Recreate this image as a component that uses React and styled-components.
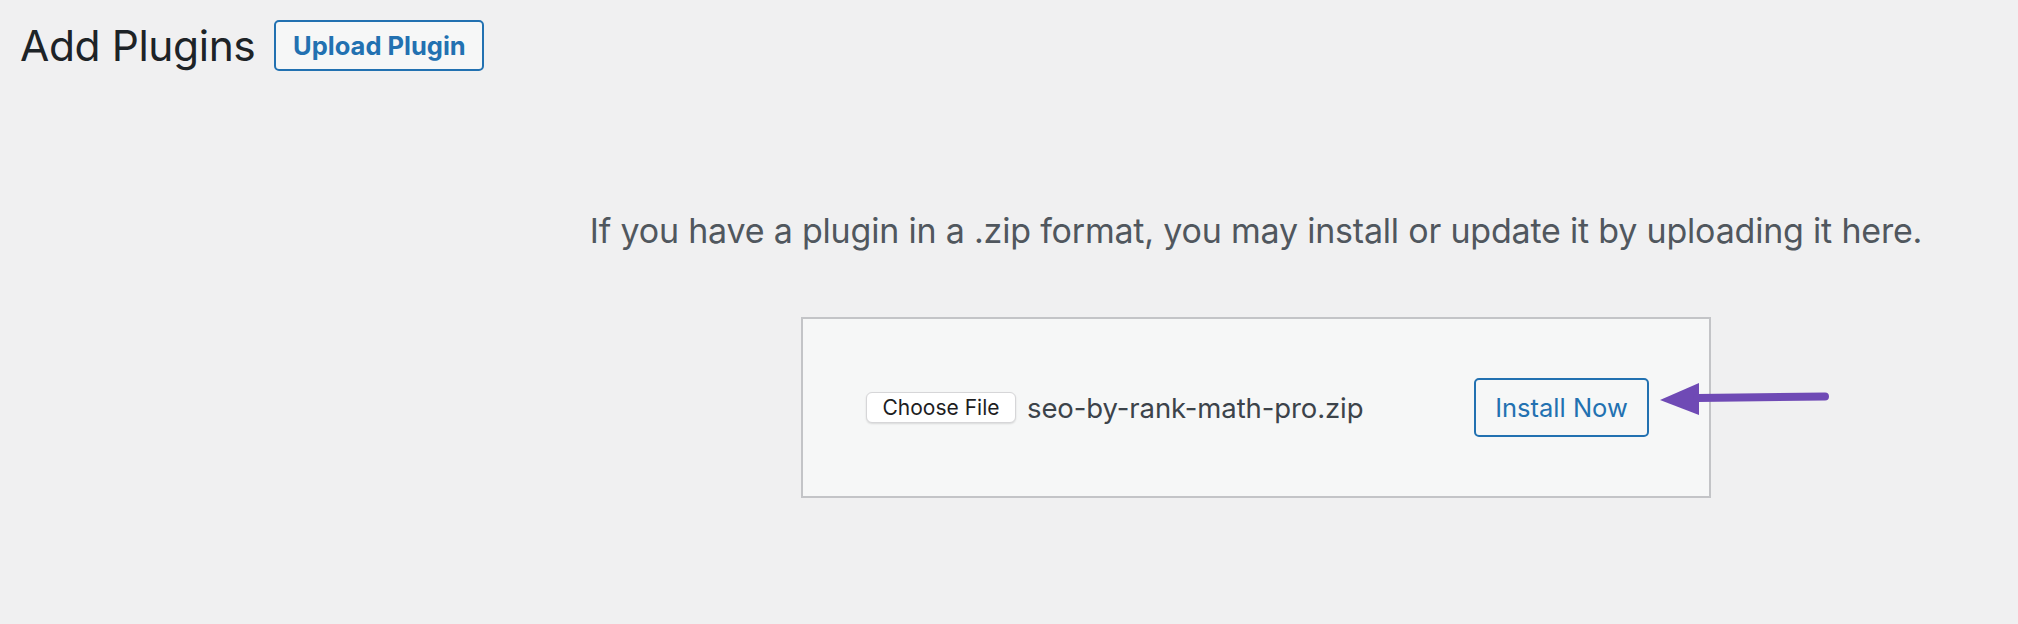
import React from "react";
import styled, { createGlobalStyle } from "styled-components";

const Global = createGlobalStyle`
  html, body { margin: 0; padding: 0; background: #f0f0f1; }
  body { font-family: Inter, "Noto Sans", "Liberation Sans", sans-serif; color: #1d2327; }
  * { box-sizing: border-box; }
`;

const Page = styled.div`
  position: relative;
  width: 2018px;
  height: 624px;
  padding: 20px 0 0 20px;
`;

const Header = styled.div`
  display: flex;
  align-items: center;
  gap: 19px;
`;

const Title = styled.h1`
  margin: 0;
  font-size: 42.5px;
  font-weight: 400;
  letter-spacing: -0.4px;
  color: #1d2327;
  line-height: 51px;
`;

const OutlineButton = styled.button`
  font-family: inherit;
  display: inline-flex;
  align-items: center;
  justify-content: center;
  background: #f6f7f7;
  color: #2271b1;
  border: 2px solid #2271b1;
  border-radius: 5px;
  width: ${(p) => p.$w}px;
  height: ${(p) => p.$h}px;
  font-size: ${(p) => p.$size}px;
  font-weight: ${(p) => p.$weight || 400};
  padding: 0;
  cursor: pointer;
`;

const UploadSection = styled.section`
  display: flex;
  flex-direction: column;
  align-items: center;
  padding-left: 474px;
  margin-top: 140px;
`;

const Help = styled.p`
  margin: 0;
  font-size: 34px;
  line-height: 40px;
  color: #50575e;
  letter-spacing: -0.2px;
`;

const Box = styled.form`
  margin-top: 66px;
  width: 910px;
  height: 181px;
  background: #f6f7f7;
  border: 2px solid #c3c4c7;
  display: flex;
  align-items: center;
  justify-content: space-between;
  padding: 0 60px 0 63px;
`;

const FilePick = styled.div`
  display: flex;
  align-items: center;
  gap: 11px;
`;

const ChooseButton = styled.span`
  display: inline-flex;
  align-items: center;
  justify-content: center;
  width: 150px;
  height: 31px;
  background: #ffffff;
  border: 1px solid #d6d6d8;
  border-radius: 6px;
  box-shadow: 0 1px 2px rgba(0, 0, 0, 0.12);
  font-size: 21px;
  color: #1d1d1f;
`;

const FileName = styled.span`
  font-size: 27.5px;
  color: #3c434a;
  letter-spacing: -0.1px;
`;

const Arrow = styled.svg`
  position: absolute;
  left: 1655px;
  top: 376px;
`;

export default function App() {
  return (
    <>
      <Global />
      <Page>
        <Header>
          <Title>Add Plugins</Title>
          <OutlineButton $w={210} $h={51} $size={25.5} $weight={700}>
            Upload Plugin
          </OutlineButton>
        </Header>
        <UploadSection>
          <Help>
            If you have a plugin in a .zip format, you may install or update it by uploading it here.
          </Help>
          <Box onSubmit={(e) => e.preventDefault()}>
            <FilePick>
              <ChooseButton>Choose File</ChooseButton>
              <FileName>seo-by-rank-math-pro.zip</FileName>
            </FilePick>
            <OutlineButton type="button" $w={175} $h={59} $size={25.5}>
              Install Now
            </OutlineButton>
          </Box>
        </UploadSection>
        <Arrow width="180" height="45" viewBox="0 0 180 45">
          <polygon points="5,24 44,7 44,39" fill="#6f4ab5" />
          <line x1="42" y1="22" x2="170" y2="20.5" stroke="#6f4ab5" strokeWidth="8" strokeLinecap="round" />
        </Arrow>
      </Page>
    </>
  );
}
